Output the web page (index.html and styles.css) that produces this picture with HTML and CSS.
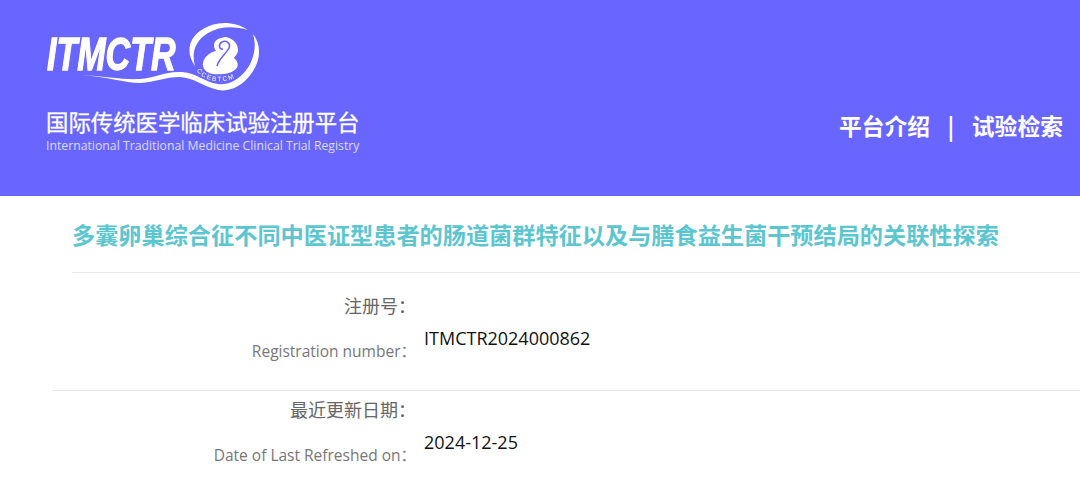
FILE: index.html
```html
<!DOCTYPE html>
<html lang="zh-CN">
<head>
  <meta charset="UTF-8" />
  <meta name="viewport" content="width=device-width, initial-scale=1.0"/>
  <title>ITMCTR</title>
  <link rel="stylesheet" href="styles.css">
</head>
<body>
  <header class="top">
    <div class="logo">
      <div class="logo-mark">
        <span class="logo-word">ITMCTR</span>
        <svg class="logo-art" viewBox="46 22 260 90" width="260" height="90" fill="none">
          <!-- swoosh under the word, runs round the right of the ring -->
          <path d="M80 75C105 76 125 83 140 83C155 82 165 77 180 77C195 78 202 86 218 90C235 93 251 79 257 63C261 52 259 42 253 34C256 44 255 52 251 62C245 75 232 86 218 84C204 82 197 73 182 72C165 71 155 78 140 79C122 80 105 76 80 75Z" fill="#fff"/>
          <!-- ring, top and left -->
          <path d="M195 66C185 52 189 37 203 29C215 22 232 20 248 30C235 26 220 26 208 33C196 40 191 52 195 66Z" fill="#fff"/>
          <!-- gourd -->
          <path d="M225 37C230 37 238 42 238 50C238 54 235 56 234 58C238 61 239 66 236 69C231 74 220 75 213 74C206 73 202 68 203 63C204 57 210 52 216 51C213 47 213 42 218 39C220 38 222 38 225 37Z" fill="#fff"/>
          <path d="M217 66C219 58 226 54 229 48C231 43 226 40 222 42C218 44 219 50 223 49" stroke="#6966ff" stroke-width="1.6"/>
          <path id="logo-arc" d="M196 70C205 84 232 86 244 70"/>
          <text class="logo-arc-text"><textPath href="#logo-arc" startOffset="1">CCEBTCM</textPath></text>
        </svg>
      </div>
      <div class="logo-cn">国际传统医学临床试验注册平台</div>
      <div class="logo-en">International Traditional Medicine Clinical Trial Registry</div>
    </div>
    <nav class="nav">
      <a>平台介绍</a>
      <span class="nav-sep">|</span>
      <a>试验检索</a>
    </nav>
  </header>

  <main class="content">
    <h1 class="title">多囊卵巢综合征不同中医证型患者的肠道菌群特征以及与膳食益生菌干预结局的关联性探索</h1>

    <div class="row row-first">
      <div class="label">
        <p class="label-cn">注册号：</p>
        <p class="label-en">Registration number：</p>
      </div>
      <div class="value">ITMCTR2024000862</div>
    </div>

    <div class="row">
      <div class="label">
        <p class="label-cn">最近更新日期：</p>
        <p class="label-en">Date of Last Refreshed on：</p>
      </div>
      <div class="value">2024-12-25</div>
    </div>
  </main>
</body>
</html>
```

FILE: styles.css
```css
html, body {
  margin: 0;
  padding: 0;
}
body {
  font-family: "Open Sans", "Noto Sans CJK SC", sans-serif;
  background: #fff;
}
.top {
  height: 196px;
  background: #6966ff;
  display: flex;
  justify-content: space-between;
  align-items: flex-start;
  padding: 0 17px 0 46px;
  color: #fff;
}
.logo {
  padding-top: 22px;
}
.logo-mark {
  position: relative;
  height: 85px;
  filter: blur(0.35px);
}
.logo-word {
  position: absolute;
  left: 1px;
  top: 9px;
  font-family: "Liberation Sans", sans-serif;
  font-size: 46px;
  line-height: 46px;
  font-weight: 700;
  font-style: italic;
  -webkit-text-stroke: 1.3px #fff;
  transform: scaleX(0.74);
  transform-origin: left;
}
.logo-art {
  position: absolute;
  left: 0;
  top: 0;
}
.logo-arc-text {
  font-family: "Liberation Sans", sans-serif;
  font-size: 6.5px;
  letter-spacing: 1.5px;
  fill: #fff;
}
.logo-cn {
  font-family: "Noto Sans CJK SC", sans-serif;
  font-size: 22.4px;
  line-height: 28px;
  white-space: nowrap;
  -webkit-text-stroke: 0.3px #fff;
}
.logo-en {
  margin-top: 2px;
  font-family: "Open Sans", sans-serif;
  font-size: 12.25px;
  line-height: 18px;
  color: #dcdbff;
  white-space: nowrap;
}
.nav {
  display: flex;
  align-items: center;
  gap: 17.5px;
  margin-top: 109px;
  font-family: "Noto Sans CJK SC", sans-serif;
  font-size: 22.8px;
  line-height: 34px;
  font-weight: 700;
}
.title {
  margin: 0 0 0 72px;
  height: 76px;
  font-family: "Noto Sans CJK SC", sans-serif;
  font-size: 23.18px;
  line-height: 76px;
  font-weight: 700;
  color: #5cc6d0;
  white-space: nowrap;
  border-bottom: 1px solid #eaeaea;
}
.row {
  margin-left: 52px;
  display: flex;
  align-items: flex-start;
}
.row-first {
  height: 103px;
  padding-top: 14px;
  border-bottom: 1px solid #eaeaea;
}
.label {
  width: 364px;
  text-align: right;
  color: #666;
}
.label p {
  margin: 0;
}
.label-cn {
  padding-top: 6px;
  font-size: 18px;
  line-height: 26px;
}
.label-en {
  padding-top: 19px;
  font-size: 15.5px;
  line-height: 26px;
  color: #777;
}
.value {
  margin-left: 8px;
  padding-top: 38px;
  font-size: 18px;
  line-height: 26px;
  color: #111;
}
```
